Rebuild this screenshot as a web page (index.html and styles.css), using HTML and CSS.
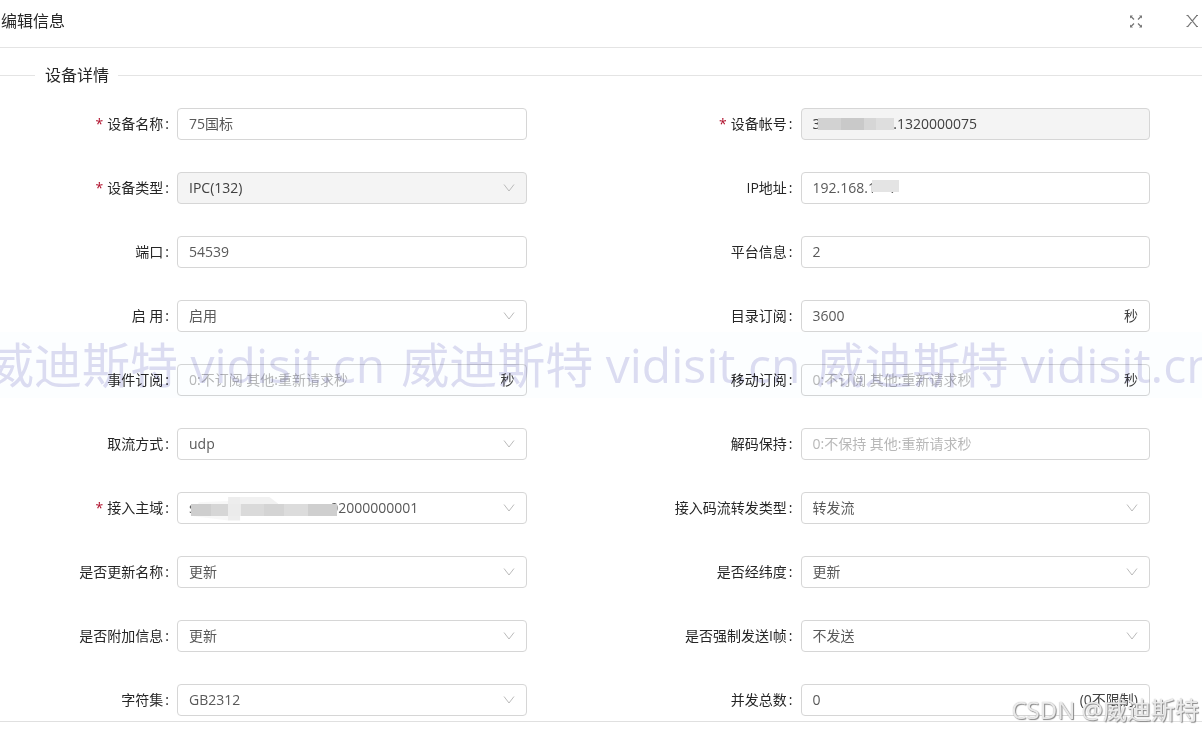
FILE: index.html
```html
<!DOCTYPE html>
<html lang="zh-CN">
<head>
<meta charset="utf-8">
<title>编辑信息</title>
<link rel="stylesheet" href="styles.css">
</head>
<body>
<svg class="sprite" aria-hidden="true">
  <symbol id="chevron" viewBox="0 0 12 12"><path d="M1 2.500 6 9l5-6.500" fill="none" stroke="currentColor"/></symbol>
</svg>
<main class="dialog">
  <header class="dialog-header">
    <h1 class="dialog-title">编辑信息</h1>
    <div class="dialog-actions">
      <button class="icon-button" type="button" aria-label="全屏">
        <svg width="14" height="14" viewBox="0 0 14 14"><path d="M2 2.500l3 3M12 2.500l-3 3M2 12.500l3-3M12 12.500l-3-3" fill="none" stroke="currentColor" stroke-width="1.300"/><path d="M1 1.500h3L1 4.500zM13 1.500h-3l3 3zM1 13.500h3l-3-3zM13 13.500h-3l3-3z" fill="currentColor"/></svg>
      </button>
      <button class="icon-button" type="button" aria-label="关闭">
        <svg width="14" height="14" viewBox="0 0 14 14"><path d="M2.500 1.200l9.600 11.600M12.100 1.200 2.500 12.800M1.500 1.500h2M11 1.500h2M1.500 12.500h2M11 12.500h2" fill="none" stroke="currentColor" stroke-width="1.200"/></svg>
      </button>
    </div>
  </header>
  <div class="dialog-body">
    <h2 class="divider">设备详情</h2>
    <form class="form">
      <div class="field"><label class="label required" for="name">设备名称</label><div class="control"><input class="input" id="name" value="75国标"></div></div>
      <div class="field"><label class="label required" for="account">设备帐号</label><div class="control disabled"><input class="input" id="account" value="3                    .1320000075" disabled><span class="mask mask-account"></span></div></div>
      <div class="field"><label class="label required" for="type">设备类型</label><div class="control disabled"><select class="input" id="type" disabled><option>IPC(132)</option></select><svg class="arrow"><use href="#chevron"/></svg></div></div>
      <div class="field"><label class="label" for="ip">IP地址</label><div class="control"><input class="input" id="ip" value="192.168.1    ."><span class="mask mask-ip"></span></div></div>
      <div class="field"><label class="label" for="port">端口</label><div class="control"><input class="input" id="port" value="54539"></div></div>
      <div class="field"><label class="label" for="platform">平台信息</label><div class="control"><input class="input" id="platform" value="2"></div></div>
      <div class="field"><label class="label" for="enabled">启 用</label><div class="control"><select class="input" id="enabled"><option>启用</option></select><svg class="arrow"><use href="#chevron"/></svg></div></div>
      <div class="field"><label class="label" for="catalog">目录订阅</label><div class="control"><input class="input" id="catalog" value="3600"><span class="suffix">秒</span></div></div>
      <div class="field"><label class="label" for="event">事件订阅</label><div class="control"><input class="input" id="event" placeholder="0:不订阅 其他:重新请求秒"><span class="suffix">秒</span></div></div>
      <div class="field"><label class="label" for="mobile">移动订阅</label><div class="control"><input class="input" id="mobile" placeholder="0:不订阅 其他:重新请求秒"><span class="suffix">秒</span></div></div>
      <div class="field"><label class="label" for="stream">取流方式</label><div class="control"><select class="input" id="stream"><option>udp</option></select><svg class="arrow"><use href="#chevron"/></svg></div></div>
      <div class="field"><label class="label" for="decode">解码保持</label><div class="control"><input class="input" id="decode" placeholder="0:不保持 其他:重新请求秒"></div></div>
      <div class="field"><label class="label required" for="domain">接入主域</label><div class="control"><select class="input" id="domain"><option>s&nbsp;&nbsp;&nbsp;&nbsp;&nbsp;&nbsp;&nbsp;&nbsp;&nbsp;&nbsp;&nbsp;&nbsp;&nbsp;&nbsp;&nbsp;&nbsp;&nbsp;&nbsp;&nbsp;&nbsp;&nbsp;&nbsp;&nbsp;&nbsp;&nbsp;&nbsp;&nbsp;&nbsp;&nbsp;&nbsp;&nbsp;&nbsp;&nbsp;&nbsp;&nbsp;&nbsp;&nbsp;02000000001</option></select><span class="mask mask-glow"></span><span class="mask mask-domain"></span><svg class="arrow"><use href="#chevron"/></svg></div></div>
      <div class="field"><label class="label" for="forward">接入码流转发类型</label><div class="control"><select class="input" id="forward"><option>转发流</option></select><svg class="arrow"><use href="#chevron"/></svg></div></div>
      <div class="field"><label class="label" for="rename">是否更新名称</label><div class="control"><select class="input" id="rename"><option>更新</option></select><svg class="arrow"><use href="#chevron"/></svg></div></div>
      <div class="field"><label class="label" for="geo">是否经纬度</label><div class="control"><select class="input" id="geo"><option>更新</option></select><svg class="arrow"><use href="#chevron"/></svg></div></div>
      <div class="field"><label class="label" for="extra">是否附加信息</label><div class="control"><select class="input" id="extra"><option>更新</option></select><svg class="arrow"><use href="#chevron"/></svg></div></div>
      <div class="field"><label class="label" for="iframe">是否强制发送I帧</label><div class="control"><select class="input" id="iframe"><option>不发送</option></select><svg class="arrow"><use href="#chevron"/></svg></div></div>
      <div class="field"><label class="label" for="charset">字符集</label><div class="control"><select class="input" id="charset"><option>GB2312</option></select><svg class="arrow"><use href="#chevron"/></svg></div></div>
      <div class="field"><label class="label" for="limit">并发总数</label><div class="control"><input class="input" id="limit" value="0"><span class="suffix">(0不限制)</span></div></div>
    </form>
  </div>
  <footer class="dialog-footer"></footer>
  <div class="watermark"><span>威迪斯特 vidisit.cn</span><span>威迪斯特 vidisit.cn</span><span>威迪斯特 vidisit.cn</span></div>
  <div class="credit">CSDN @威迪斯特</div>
</main>
</body>
</html>
```
FILE: styles.css
```css
* { box-sizing: border-box; }

body {
  margin: 0;
  background: #fff;
  color: #262626;
  font: 14px/22px "Open Sans", "Noto Sans CJK SC", sans-serif;
}

.sprite { display: none; }

.dialog {
  position: relative;
  display: flex;
  flex-direction: column;
  min-height: 100vh;
  overflow: hidden;
}

.dialog-header {
  display: flex;
  align-items: center;
  justify-content: space-between;
  height: 48px;
  padding: 0 3px 6px 1px;
  border-bottom: 1px solid #e4e4e4;
}

.dialog-title,
.divider {
  margin: 0;
  font-size: 16px;
  font-weight: 400;
  line-height: 24px;
}

.dialog-actions { display: flex; gap: 42px; }

.icon-button {
  display: flex;
  padding: 0;
  border: 0;
  background: none;
  color: #777;
}

.dialog-body { flex: 1; padding: 15px 0 5px; }

.divider { display: flex; align-items: center; margin-bottom: 21px; }
.divider::before,
.divider::after { content: ""; height: 1px; background: #e4e4e4; }
.divider::before { width: 35px; margin-right: 10px; }
.divider::after { flex: 1; margin-left: 9px; }

.form {
  display: grid;
  grid-template-columns: 1fr 1fr;
  gap: 32px 97px;
  padding-right: 52px;
}

.field {
  display: grid;
  grid-template-columns: 177px minmax(0, 1fr);
  align-items: center;
}

.label { text-align: right; white-space: nowrap; }
.label::after { content: ":"; margin: 0 8px 0 2px; }
.required::before { content: "*"; margin-right: 4px; color: #b0102c; }

.control {
  position: relative;
  display: flex;
  align-items: center;
  height: 32px;
  border: 1px solid #d6d6d6;
  border-radius: 4px;
}

.input {
  flex: 1;
  min-width: 0;
  height: 30px;
  padding: 0 11px;
  border: 0;
  outline: 0;
  appearance: none;
  background: none;
  color: #595959;
  font: inherit;
}
input.input { padding-bottom: 2px; }
.input::placeholder { color: #b8b8b8; opacity: 1; }
.input:disabled { color: #404040; opacity: 1; }
.disabled { background: #f4f4f4; }

.suffix { padding-right: 11px; color: #404040; }

.arrow {
  position: absolute;
  right: 11px;
  width: 12px;
  height: 12px;
  color: #bbb;
  pointer-events: none;
}

.mask { position: absolute; pointer-events: none; }
.mask-account {
  left: 16px;
  top: 9px;
  width: 76px;
  height: 12px;
  background: linear-gradient(90deg, #d2d2d2 0 30%, #c9c9c9 30% 60%, #d6d6d6 60% 76%, #dedede 76%);
}
.mask-ip { left: 70px; top: 7px; width: 27px; height: 12px; background: #e4e4e4; }
.mask-glow {
  left: 14px;
  top: 3px;
  width: 86px;
  height: 25px;
  background: linear-gradient(90deg, #f7f7f7 0 42%, #ededed 42% 56%, #f1f1f1 56%);
  clip-path: polygon(8% 25%, 42% 20%, 42% 4%, 90% 4%, 100% 30%, 100% 80%, 56% 80%, 56% 98%, 42% 98%, 0 80%);
}
.mask-domain {
  left: 13px;
  top: 11px;
  width: 146px;
  height: 12px;
  background: linear-gradient(90deg, #cecece 0 14%, #d6d6d6 14% 25%, #ebebeb 25% 34%, #dadada 34% 50%, #d4d4d4 50% 64%, #dcdcdc 64% 80%, #cfcfcf 80%);
}

.dialog-footer { height: 9px; border-top: 1px solid #e0e0e0; }

.watermark {
  position: absolute;
  top: 332px;
  left: -14px;
  right: 0;
  display: flex;
  gap: 16px;
  height: 66px;
  overflow: hidden;
  background: #fcfeff;
  color: #dbdcf1;
  font-size: 48px;
  line-height: 66px;
  white-space: nowrap;
  mix-blend-mode: multiply;
  pointer-events: none;
}

.credit {
  position: absolute;
  right: 3px;
  bottom: 4px;
  color: #fffc;
  font-size: 24px;
  line-height: 32px;
  text-shadow: 1px 1px 1px #888, 0 0 1px #999;
  pointer-events: none;
}
```
